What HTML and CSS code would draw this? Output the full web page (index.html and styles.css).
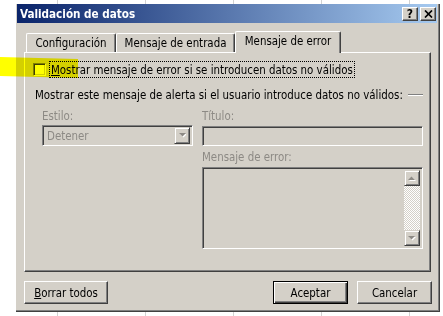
FILE: index.html
```html
<!DOCTYPE html>
<html>
<head>
    <title>Validación de datos</title>
    <link rel="stylesheet" href="styles.css">
</head>
<body>
    <div class="desk">
        <div class="dialog">
            <div class="titlebar">
                <span class="title">Validación de datos</span>
                <div class="caption-btns">
                    <span class="cbtn help">?</span>
                    <span class="cbtn close">
                        <svg width="9" height="8" viewBox="0 0 9 8"><path d="M1 0.5 L8 7.5 M8 0.5 L1 7.5" stroke="#000" stroke-width="1.7"/></svg>
                    </span>
                </div>
            </div>

            <div class="tabs">
                <div class="tab tab-config">Configuración</div>
                <div class="tab tab-input">Mensaje de entrada</div>
                <div class="tab tab-error active">Mensaje de error</div>
            </div>

            <div class="panel">
                <label class="check-row">
                    <span class="checkbox"></span>
                    <span class="focus"><u>M</u>ostrar mensaje de error si se introducen datos no válidos</span>
                </label>

                <div class="group-head">
                    <span>Mostrar este mensaje de alerta si el usuario introduce datos no válidos:</span>
                    <span class="etch"></span>
                </div>

                <div class="fields">
                    <div class="col-left">
                        <div class="lbl">Estilo:</div>
                        <div class="combo sunken">
                            <span class="combo-text">Detener</span>
                            <span class="drop raised">
                                <svg width="7" height="5" viewBox="0 0 7 5"><path d="M1 1 H8 L4.5 4.5 Z" fill="#fff"/><path d="M0 0 H7 L3.5 3.5 Z" fill="#8d8a85"/></svg>
                            </span>
                        </div>
                    </div>
                    <div class="col-right">
                        <div class="lbl">Título:</div>
                        <div class="field sunken"></div>
                        <div class="lbl lbl-msg">Mensaje de error:</div>
                        <div class="area sunken">
                            <div class="vscroll">
                                <span class="sbtn raised">
                                    <svg width="8" height="5" viewBox="0 0 8 5"><path d="M1 5 H8 L4.5 1.5 Z" fill="#fff"/><path d="M0 4 H7 L3.5 0.5 Z" fill="#8d8a85"/></svg>
                                </span>
                                <span class="track"></span>
                                <span class="sbtn raised">
                                    <svg width="8" height="5" viewBox="0 0 8 5"><path d="M1 1 H8 L4.5 4.5 Z" fill="#fff"/><path d="M0 0 H7 L3.5 3.5 Z" fill="#8d8a85"/></svg>
                                </span>
                            </div>
                        </div>
                    </div>
                </div>
            </div>

            <div class="footer">
                <button class="btn btn-clear"><u>B</u>orrar todos</button>
                <span class="spacer"></span>
                <button class="btn btn-default">Aceptar</button>
                <button class="btn">Cancelar</button>
            </div>
        </div>

        <div class="highlight"></div>
    </div>
</body>
</html>
```

FILE: styles.css
```css
body {
    margin: 0;
    font-family: "DejaVu Sans Condensed", "DejaVu Sans", sans-serif;
    font-stretch: condensed;
    font-size: 11.4px;
    color: #000;
}
.desk {
    position: relative;
    width: 443px;
    height: 316px;
    overflow: hidden;
    padding-top: 4px;
    box-sizing: border-box;
    background-color: #fff;
    background-image: repeating-linear-gradient(to right, transparent 0 87px, #d2d2d2 87px 88px);
    background-position: -30px 0;
}

/* window */
.dialog {
    width: 424px;
    height: 308px;
    margin-left: 16px;
    box-sizing: border-box;
    background: #d4d0c8;
    border-right: 1px solid #404040;
    border-bottom: 1px solid #404040;
    box-shadow: inset -1px -1px #808080;
    padding: 0 2px 0 1px;
    display: flex;
    flex-direction: column;
}
.titlebar {
    height: 19px;
    display: flex;
    align-items: center;
    padding: 0 1px 0 3px;
    background: linear-gradient(to right, #0a246a, #a6caf0);
}
.title {
    flex: 1;
    color: #fff;
    font-weight: bold;
    font-size: 11.6px;
}
.caption-btns {
    display: flex;
    gap: 2px;
}
.cbtn {
    width: 16px;
    height: 14px;
    box-sizing: border-box;
    display: flex;
    align-items: center;
    justify-content: center;
    background: #d4d0c8;
    border: 1px solid;
    border-color: #fff #404040 #404040 #fff;
    box-shadow: inset -1px -1px #808080;
    font-weight: bold;
    font-size: 12px;
    line-height: 1;
}

/* tabs */
.tabs {
    display: flex;
    align-items: flex-end;
    height: 21px;
    margin-top: 8px;
    padding-left: 9px;
    position: relative;
    z-index: 1;
}
.tab {
    height: 19px;
    box-sizing: border-box;
    display: flex;
    align-items: center;
    justify-content: center;
    padding-bottom: 1px;
    border: 1px solid;
    border-bottom: none;
    border-color: #fff #404040 #fff #fff;
    border-radius: 2px 2px 0 0;
    box-shadow: inset -1px 0 #808080;
}
.tab-config { width: 90px; }
.tab-input { width: 119px; }
.tab-error { width: 106px; }
.tab.active {
    height: 22px;
    margin-bottom: -1px;
    background: #d4d0c8;
    padding-bottom: 3px;
}

/* panel */
.panel {
    height: 220px;
    margin: 0 6px 0 7px;
    box-sizing: border-box;
    border: 1px solid;
    border-color: #fff #404040 #404040 #fff;
    box-shadow: inset -1px -1px #808080;
}
.check-row {
    display: flex;
    align-items: center;
    gap: 3px;
    margin-top: 8px;
    padding-left: 8px;
}
.checkbox {
    width: 13px;
    height: 13px;
    box-sizing: border-box;
    background: #fff;
    border: 1px solid;
    border-color: #808080 #fff #fff #808080;
    box-shadow: inset 1px 1px #404040, inset -1px -1px #d4d0c8;
}
.focus {
    height: 17px;
    box-sizing: border-box;
    display: flex;
    align-items: center;
    padding: 0 1px;
    border: 1px dotted #000;
}
.group-head {
    display: flex;
    align-items: center;
    height: 14px;
    margin-top: 10px;
    padding: 0 7px 0 10px;
}
.etch {
    flex: 1;
    margin-left: 5px;
    border-top: 1px solid #808080;
    border-bottom: 1px solid #fff;
}

.fields {
    display: flex;
    gap: 9px;
    margin-top: 7px;
    padding-left: 17px;
}
.col-left { width: 151px; }
.col-right { width: 221px; }
.lbl {
    height: 14px;
    line-height: 14px;
    margin-bottom: 2px;
    color: #8d8a85;
}
.col-right .lbl { margin-bottom: 3px; }
.col-right .lbl-msg { margin-top: 4px; }

.sunken {
    box-sizing: border-box;
    border: 1px solid;
    border-color: #808080 #fff #fff #808080;
    box-shadow: inset 1px 1px #404040, inset -1px -1px #d4d0c8;
}
.raised {
    box-sizing: border-box;
    background: #d4d0c8;
    border: 1px solid;
    border-color: #d4d0c8 #404040 #404040 #d4d0c8;
    box-shadow: inset 1px 1px #fff, inset -1px -1px #808080;
}
.combo {
    height: 21px;
    display: flex;
    align-items: center;
    padding: 2px;
}
.combo-text {
    flex: 1;
    padding-left: 2px;
    color: #8d8a85;
}
.drop {
    width: 16px;
    height: 17px;
    display: flex;
    align-items: center;
    justify-content: center;
}
.field {
    height: 20px;
}
.area {
    height: 82px;
    display: flex;
    justify-content: flex-end;
    padding: 2px;
}
.vscroll {
    width: 16px;
    display: flex;
    flex-direction: column;
}
.sbtn {
    height: 16px;
    display: flex;
    align-items: center;
    justify-content: center;
}
.track {
    flex: 1;
    background: repeating-conic-gradient(#fff 0 25%, #d4d0c8 0 50%) 0 0 / 2px 2px;
}

/* footer buttons */
.footer {
    display: flex;
    gap: 9px;
    margin-top: 9px;
    padding: 0 5px 0 7px;
}
.spacer { flex: 1; }
.btn {
    height: 23px;
    width: 75px;
    box-sizing: border-box;
    font: inherit;
    color: #000;
    padding: 0;
    background: #d4d0c8;
    border: 1px solid;
    border-color: #fff #404040 #404040 #fff;
    box-shadow: inset -1px -1px #808080;
}
.btn-clear { width: 84px; }
.btn-default {
    border-color: #000;
    box-shadow: inset 1px 1px #fff, inset -1px -1px #404040, inset -2px -2px #808080;
}

/* highlighter mark over the checkbox */
.highlight {
    position: absolute;
    left: 0;
    top: 57px;
    width: 78px;
    height: 21px;
    background: #ffff00;
    mix-blend-mode: multiply;
    clip-path: polygon(0 0, 100% 10%, 100% 100%, 0 90%);
}
```
